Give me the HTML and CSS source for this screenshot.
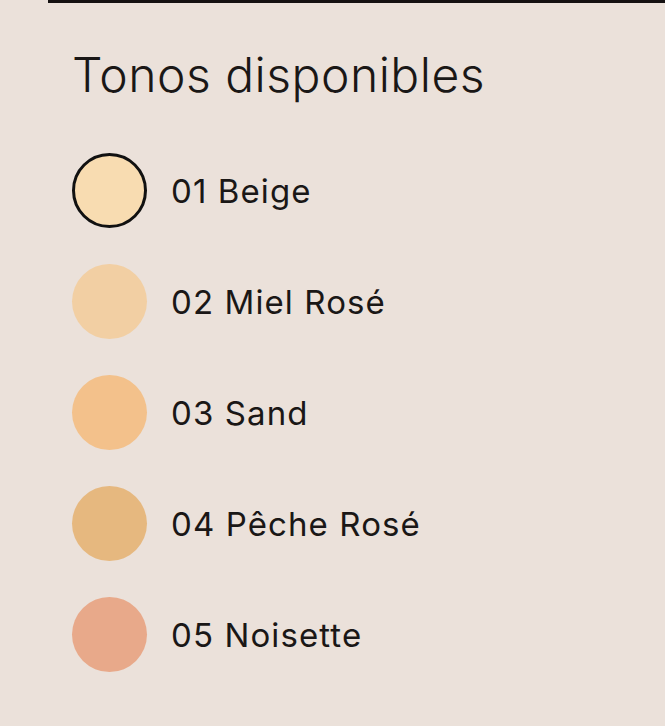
FILE: index.html
```html
<!DOCTYPE html>
<html lang="es">
<head>
    <meta charset="UTF-8">
    <meta name="viewport" content="width=device-width, initial-scale=1.0">
    <title>Tonos disponibles</title>
    <link rel="stylesheet" href="styles.css">
</head>
<body>
    <div class="top-rule"></div>
    <section class="shades">
        <h2 class="shades-title">Tonos disponibles</h2>
        <ul class="shade-list">
            <li class="shade shade-selected">
                <span class="swatch" style="background-color: #f8dcb1;"></span>
                <span class="shade-name">01 Beige</span>
            </li>
            <li class="shade">
                <span class="swatch" style="background-color: #f2cfa3;"></span>
                <span class="shade-name">02 Miel Rosé</span>
            </li>
            <li class="shade">
                <span class="swatch" style="background-color: #f3c18b;"></span>
                <span class="shade-name">03 Sand</span>
            </li>
            <li class="shade">
                <span class="swatch" style="background-color: #e6b87f;"></span>
                <span class="shade-name">04 Pêche Rosé</span>
            </li>
            <li class="shade">
                <span class="swatch" style="background-color: #e8a98a;"></span>
                <span class="shade-name">05 Noisette</span>
            </li>
        </ul>
    </section>
</body>
</html>
```

FILE: styles.css
```css
body {
    margin: 0;
    background-color: #ebe1da;
    font-family: Inter, "Noto Sans", sans-serif;
    color: #1a1716;
}

.top-rule {
    margin-left: 48px;
    height: 3px;
    background-color: #151111;
}

.shades {
    padding: 43px 0 0 72px;
}

.shades-title {
    margin: 0 0 49px;
    font-size: 48px;
    font-weight: 300;
    letter-spacing: 0.5px;
    line-height: 58px;
}

.shade-list {
    list-style: none;
    margin: 0;
    padding: 0;
}

.shade {
    display: flex;
    align-items: center;
    gap: 24px;
    height: 75px;
    margin-bottom: 36px;
}

.swatch {
    width: 75px;
    height: 75px;
    border-radius: 50%;
    box-sizing: border-box;
    flex-shrink: 0;
}

.shade-selected .swatch {
    border: 3px solid #111;
}

.shade-name {
    font-size: 33px;
    font-weight: 400;
    letter-spacing: 1.1px;
}
```
